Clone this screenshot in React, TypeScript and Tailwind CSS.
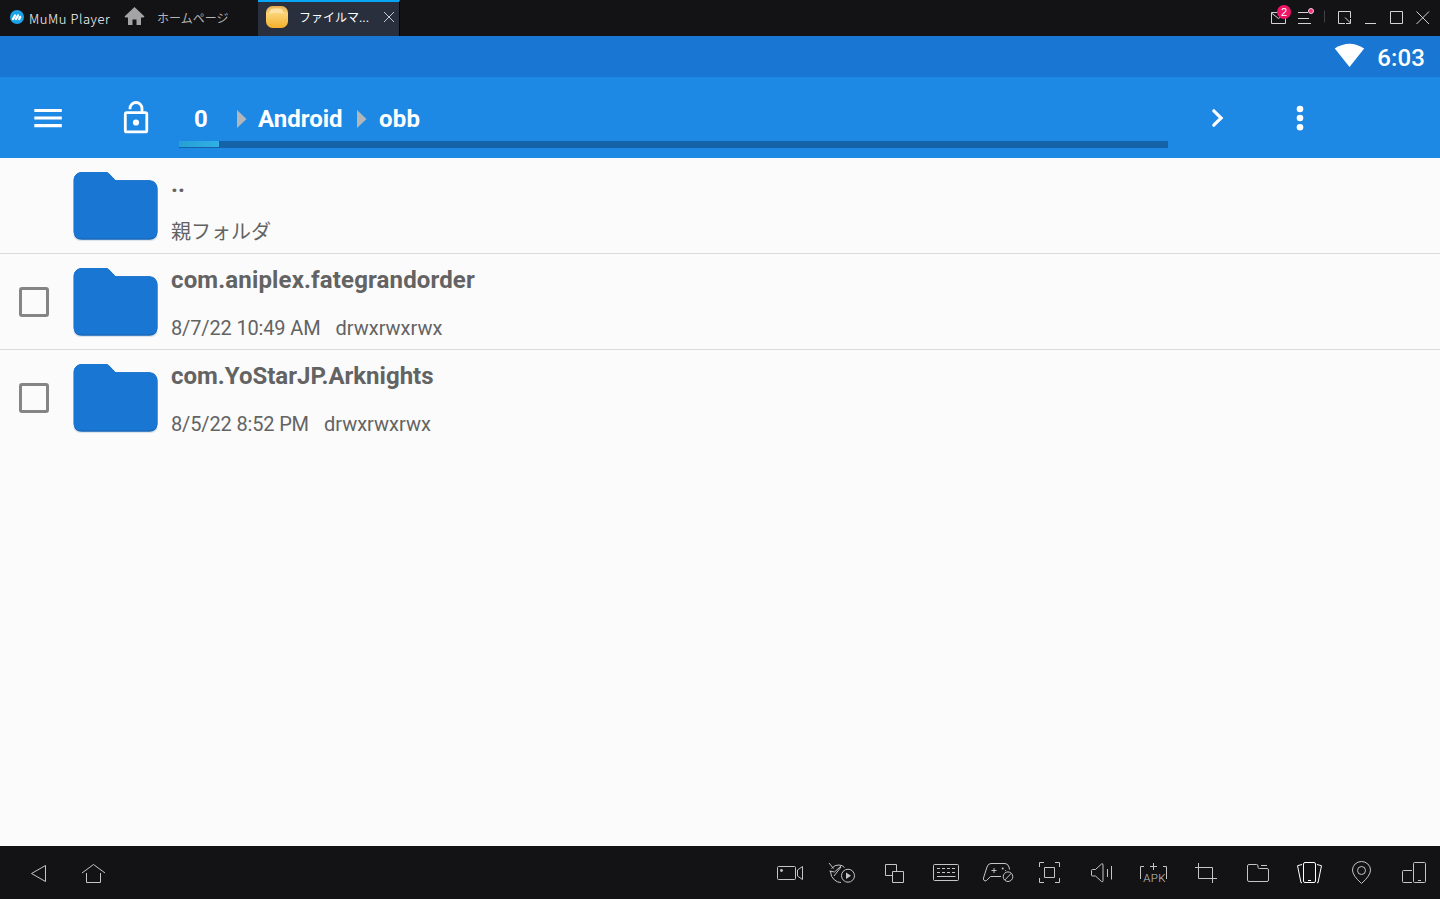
import type { ReactNode } from "react";

type IconProps = { box: string; className: string; children: ReactNode };

function Icon({ box, className, children }: IconProps) {
  return (
    <svg viewBox={box} className={`shrink-0 ${className}`} fill="none" stroke="currentColor">
      {children}
    </svg>
  );
}

function TitleBar() {
  return (
    <header className="flex h-9 shrink-0 bg-[#131315] font-['Liberation_Sans','Noto_Sans_CJK_JP',sans-serif] text-[#d3d3d5]">
      <div className="flex w-[122px] items-center pl-[10px]">
        <Icon box="0 0 14 14" className="mb-0.5 size-[14px]">
          <circle cx="7" cy="7" r="7" fill="#1ba3e8" stroke="none" />
          <path d="M3 9 5 5.500M6 9l2-3.500M9.200 9l1-2" stroke="#fff" strokeWidth="2.300" strokeLinecap="round" strokeLinejoin="round" />
        </Icon>
        <span className="ml-[5px] pt-px font-['Noto_Sans_CJK_JP',sans-serif] text-[13px] leading-5 font-light tracking-[0.55px] whitespace-nowrap text-white">MuMu Player</span>
      </div>
      <div className="flex w-[136px] items-center">
        <Icon box="122 0 24 36" className="h-9 w-6">
          <path d="m134.500 7 10 9.500-1 1H141V25h-4.500v-5.500h-4V25H128v-7.500h-2.500l-1-1z" fill="#a4a4a6" stroke="none" />
        </Icon>
        <span className="ml-[11px] pt-px text-[12px] whitespace-nowrap text-[#b4b4b6]">ホームページ</span>
      </div>
      <div className="flex w-[142px] items-center border-t-2 border-r border-t-[#08a5f5] border-r-[#050506] bg-[#2a2f3e] pb-0.5">
        <Icon box="0 0 22 22" className="mb-0.5 ml-2 size-[22px]">
          <defs>
            <linearGradient id="gold" x1="0" y1="0" x2="0" y2="1">
              <stop offset="0" stopColor="#e2ad55" />
              <stop offset="0.35" stopColor="#fbd377" />
              <stop offset="1" stopColor="#f3b02b" />
            </linearGradient>
          </defs>
          <rect width="22" height="22" rx="6.500" fill="url(#gold)" stroke="none" />
          <path d="M5 3q6-1.500 11 0l2 4.500q-8-1.500-15 0z" fill="#ffebb5" fillOpacity=".75" stroke="none" />
        </Icon>
        <span className="ml-[11px] w-[73px] text-[12px] whitespace-nowrap text-white">ファイルマ...</span>
        <Icon box="0 0 12 12" className="mb-0.5 ml-[11px] size-3 text-[#c6c8ce]">
          <path d="m1 1 10 10M11 1 1 11" />
        </Icon>
      </div>
      <div className="ml-auto flex">
        <Icon box="24 0 28 36" className="h-9 w-7">
          <path d="M31.500 12.500h14v11h-14zM31.500 13l7 5.500 7-5.500" />
          <circle cx="44" cy="12" r="7" fill="#f01467" stroke="none" />
          <text x="44" y="16" textAnchor="middle" fontSize="11" fill="#fff" stroke="none">2</text>
        </Icon>
        <Icon box="52 0 28 36" className="h-9 w-7">
          <path d="M58 12.500h10M58 18.500h11M58 23.500h13" />
          <circle cx="71" cy="11" r="2.500" fill="#f0307c" stroke="#f5cad9" />
        </Icon>
        <Icon box="80 0 12 36" className="h-9 w-3">
          <path d="M84.500 10.500v12" stroke="#424245" />
        </Icon>
        <Icon box="92 0 26 36" className="h-9 w-[26px]">
          <path d="M105 23.500h-6.500v-12h12V18M105 17.500l5.500 5.500M110.500 19v4.500H106" />
        </Icon>
        <Icon box="118 0 26 36" className="h-9 w-[26px]">
          <path d="M125 23.500h11" />
        </Icon>
        <Icon box="144 0 26 36" className="h-9 w-[26px]">
          <path d="M150.500 11.500h12v12h-12z" />
        </Icon>
        <Icon box="170 0 30 36" className="h-9 w-[30px]">
          <path d="m176.500 11.500 12.500 12.500M189 11.500 176.500 24" />
        </Icon>
      </div>
    </header>
  );
}

function StatusBar() {
  return (
    <div className="flex h-[41px] shrink-0 items-center justify-end bg-[#1976d2] pr-[15px] text-white">
      <Icon box="0 0 30 24" className="mb-[3px] h-6 w-[30px]">
        <path d="M-.2 5.500Q14.500-4 29.200 5.500L14.500 24z" fill="#fff" stroke="none" />
      </Icon>
      <span className="ml-3 pt-[3px] text-[24px] leading-6 font-medium tracking-[0.1px]">6:03</span>
    </div>
  );
}

function Crumb({ className }: { className: string }) {
  return (
    <Icon box="0 0 10 18" className={`h-[18px] w-[10px] ${className}`}>
      <path d="M0 0 9.500 9 0 18z" fill="#b4b7b9" stroke="none" />
    </Icon>
  );
}

function Toolbar() {
  return (
    <nav className="flex h-[81px] shrink-0 bg-[#1e88e5] text-white">
      <Icon box="0 77 110 81" className="h-[81px] w-[110px]">
        <path d="M34.300 110.500h27.500M34.300 118h27.500M34.300 125.600h27.500" strokeWidth="3.200" />
      </Icon>
      <Icon box="110 77 69 81" className="h-[81px] w-[69px]">
        <rect x="125.300" y="112.600" width="21.500" height="19.300" rx="1.500" strokeWidth="2.800" />
        <path d="M130 109.300v-.8a6 6 0 0 1 12 0v4" strokeWidth="2.800" />
        <circle cx="136" cy="122.500" r="3.100" fill="#fff" stroke="none" />
      </Icon>
      <div className="flex w-[989px] flex-col">
        <div className="flex h-[64px] items-center pt-[20px] text-[24px] leading-[28px] font-bold">
          <span className="ml-[15px] w-[14px]">0</span>
          <Crumb className="ml-[29px]" />
          <span className="ml-[11px] w-[85px]">Android</span>
          <Crumb className="ml-[14px]" />
          <span className="ml-[12px] tracking-[0.2px]">obb</span>
        </div>
        <div className="h-[6.5px] bg-[#1662a9]">
          <div className="h-[6px] w-10 bg-linear-to-r from-[#25a0d5] to-[#31b0e4]" />
        </div>
      </div>
      <Icon box="1168 77 92 81" className="h-[81px] w-[92px]">
        <path d="m1213.800 110.800 7.300 7.200-7.300 7.200" strokeWidth="3.200" strokeLinecap="round" />
      </Icon>
      <Icon box="1260 77 80 81" className="h-[81px] w-20">
        <g fill="#fff" stroke="none">
          <circle cx="1300" cy="109" r="3.300" />
          <circle cx="1300" cy="118" r="3.300" />
          <circle cx="1300" cy="127.200" r="3.300" />
        </g>
      </Icon>
    </nav>
  );
}

type RowProps = { name: string; nameClass?: string; details: string[]; parent?: boolean; last?: boolean };

function FolderRow({ name, nameClass = "", details, parent, last }: RowProps) {
  return (
    <li className={`flex h-24 border-b ${last ? "border-transparent" : "border-[#dadada]"}`}>
      <div className="flex w-[70px] items-center pl-[19px]">
        {!parent && <span className="size-[30px] rounded-[3px] border-3 border-[#858585]" />}
      </div>
      <Icon box="70 0 92 95" className="h-[95px] w-[92px]">
        <path d="M80.500 17h27l8 8H150q7.800 0 7.800 8v42q0 8-8 8h-69q-7.500 0-7.500-8V24q0-7 7.200-7z" fill="#9fb4ca" fillOpacity=".35" stroke="none" />
        <path d="M81.500 14H106q1.800 0 3 1.500l6.500 6.800H149.500q8 2 8 8.500v43.700q-1 7-8 7.300h-68q-7-.300-7.800-7.300V21.500q.800-6.500 7.800-7.500z" fill="#1565b5" stroke="none" />
        <path d="M81.500 14H106q1.800 0 3 1.500l6.500 6.800H149.500q7 .300 7.800 7.700v43.500q-.800 6.700-7.800 7h-68q-7-.300-7.800-7V21.500q.800-6.500 7.800-7.500z" fill="#1976d2" stroke="none" />
      </Icon>
      <div className="ml-[9px] flex flex-col whitespace-pre text-[#636363]">
        <span className={`mt-3 text-[24px] leading-[28px] font-bold ${nameClass}`}>{name}</span>
        <div className="mt-[22px] flex gap-[15px] text-[20px] leading-6">
          {details.map((detail, i) => (
            <span key={detail} className={parent || i > 0 ? "" : "tracking-[-0.15px]"}>
              {detail}
            </span>
          ))}
        </div>
      </div>
    </li>
  );
}

const tools: { id: string; art: ReactNode }[] = [
  {
    id: "record",
    art: (
      <>
        <rect x="13.500" y="20.500" width="18" height="13" rx="1" />
        <path d="m38.500 20.500-5 3.500v6l5 3.500z" />
        <circle cx="17.500" cy="24.500" r="1.400" fill="currentColor" stroke="none" />
      </>
    ),
  },
  {
    id: "operation",
    art: (
      <>
        <path d="m13 17 4.500 5.500M15.500 22.500q3.500-4 7.500-3.500 3.500 0 5.500 2.500M13.500 25l5 1 6.500-6M18 30l7-9M14.500 25q0 6 4 9 3 2.500 6.500 2.500" />
        <circle cx="32" cy="29.700" r="6.500" />
        <path d="m30 26.500 5 3.200-5 3.300z" fill="currentColor" stroke="none" />
      </>
    ),
  },
  { id: "multi", art: <path d="M24 29.500h-6.500v-11h11V25M24.500 25.500h11v11h-11z" /> },
  {
    id: "keyboard",
    art: (
      <>
        <rect x="13.500" y="18.500" width="25" height="16" rx="1" />
        <path d="M17 22.500h18.500M17 26.500h18.500" strokeDasharray="3 2" />
        <path d="M17 30.500h18.500" />
      </>
    ),
  },
  {
    id: "gamepad",
    art: (
      <>
        <path d="M37.500 23.500 37 21q-1-3.500-4-3.500H19q-3 0-4 3.500l-3.500 11q-.5 2.500 1.500 3 1.500 0 3-2l2.500-2.500H29M19.500 24.500h5M22 22v5" />
        <circle cx="30.700" cy="22.500" r="1" fill="currentColor" stroke="none" />
        <circle cx="33.500" cy="24.500" r=".6" fill="currentColor" stroke="none" />
        <circle cx="36" cy="30.700" r="4.800" />
        <path d="m32.800 34 6.400-6.600" />
      </>
    ),
  },
  {
    id: "screenshot",
    art: <path d="M20 16.500h-4.500V21M31 16.500h4.500V21M15.500 32v4.500H20M35.500 32v4.500H31M20.500 21.500h10v10h-10z" />,
  },
  {
    id: "volume",
    art: <path d="M15.500 24.500q0-1 1-1h3l6-5.500q1.500-1 1.500 1v15.500q0 2-1.500 1l-6-5.500h-3q-1 0-1-1zM31.500 23v8M35.500 20v13.500" />,
  },
  {
    id: "apk",
    art: (
      <>
        <path d="M16 20.500h-3.500V33M35 20.500h3.500V33M25.500 17v7M22 20.500h7" />
        <text x="15.300" y="36" fontSize="11.500" fontWeight="300" letterSpacing=".3" fill="currentColor" stroke="none" className="font-[Roboto,sans-serif]">APK</text>
      </>
    ),
  },
  { id: "crop", art: <path d="M18.500 17v15.500H37M15 21.500h17.500V37" /> },
  {
    id: "folder",
    art: <path d="M17 18.500h7.500q1.500 0 1.500 1.500v1.500q0 1 1.500 1H35q1.500 0 1.500 1.500v10q0 1.500-1.500 1.500H17q-1.500 0-1.500-1.500V20q0-1.500 1.500-1.500zM29 19.500h6" />,
  },
  {
    id: "shake",
    art: (
      <g stroke="#fff">
        <rect x="19.500" y="16.500" width="12" height="20" rx="1.500" />
        <path d="M24 34.500h3M18 18.500l-4.500 1.200 3.500 17h1M33 18.500l4.500 1.200-3.500 17h-1" />
      </g>
    ),
  },
  {
    id: "location",
    art: (
      <>
        <path d="M25.500 37.500q-9-8-9-13.500a9 8.500 0 0 1 18 0q0 5.500-9 13.500z" />
        <circle cx="25.500" cy="24.500" r="4" />
      </>
    ),
  },
  {
    id: "rotate",
    art: (
      <>
        <rect x="25.500" y="16.500" width="12" height="20" rx="1" />
        <path d="M30 34.500h3M24 24.500h-8.500q-1 0-1 1v10q0 1 1 1H24" />
      </>
    ),
  },
];

function BottomBar() {
  return (
    <footer className="flex h-[53px] shrink-0 bg-[#131315] text-[#c5c5c6]">
      <Icon box="0 0 66 53" className="h-[53px] w-[66px]">
        <path d="m31.500 27.500 14-8v16z" />
      </Icon>
      <Icon box="66 0 54 53" className="h-[53px] w-[54px]">
        <path d="m82 27 11.500-8.500L105 27M86.500 27v9.500h14V27" />
      </Icon>
      <div className="ml-auto flex">
        {tools.map(({ id, art }) => (
          <Icon key={id} box="0 0 52 53" className="h-[53px] w-[52px]">
            {art}
          </Icon>
        ))}
      </div>
    </footer>
  );
}

export default function App() {
  return (
    <div className="flex h-[899px] w-[1440px] flex-col overflow-hidden bg-[#fbfbfb] font-[Roboto,'Noto_Sans_CJK_JP',sans-serif]">
      <TitleBar />
      <StatusBar />
      <Toolbar />
      <ul className="grow">
        <FolderRow name=".." details={["親フォルダ"]} parent />
        <FolderRow
          name="com.aniplex.fategrandorder"
          nameClass="tracking-[0.14px]"
          details={["8/7/22 10:49 AM", "drwxrwxrwx"]}
        />
        <FolderRow name="com.YoStarJP.Arknights" details={["8/5/22 8:52 PM", "drwxrwxrwx"]} last />
      </ul>
      <BottomBar />
    </div>
  );
}
